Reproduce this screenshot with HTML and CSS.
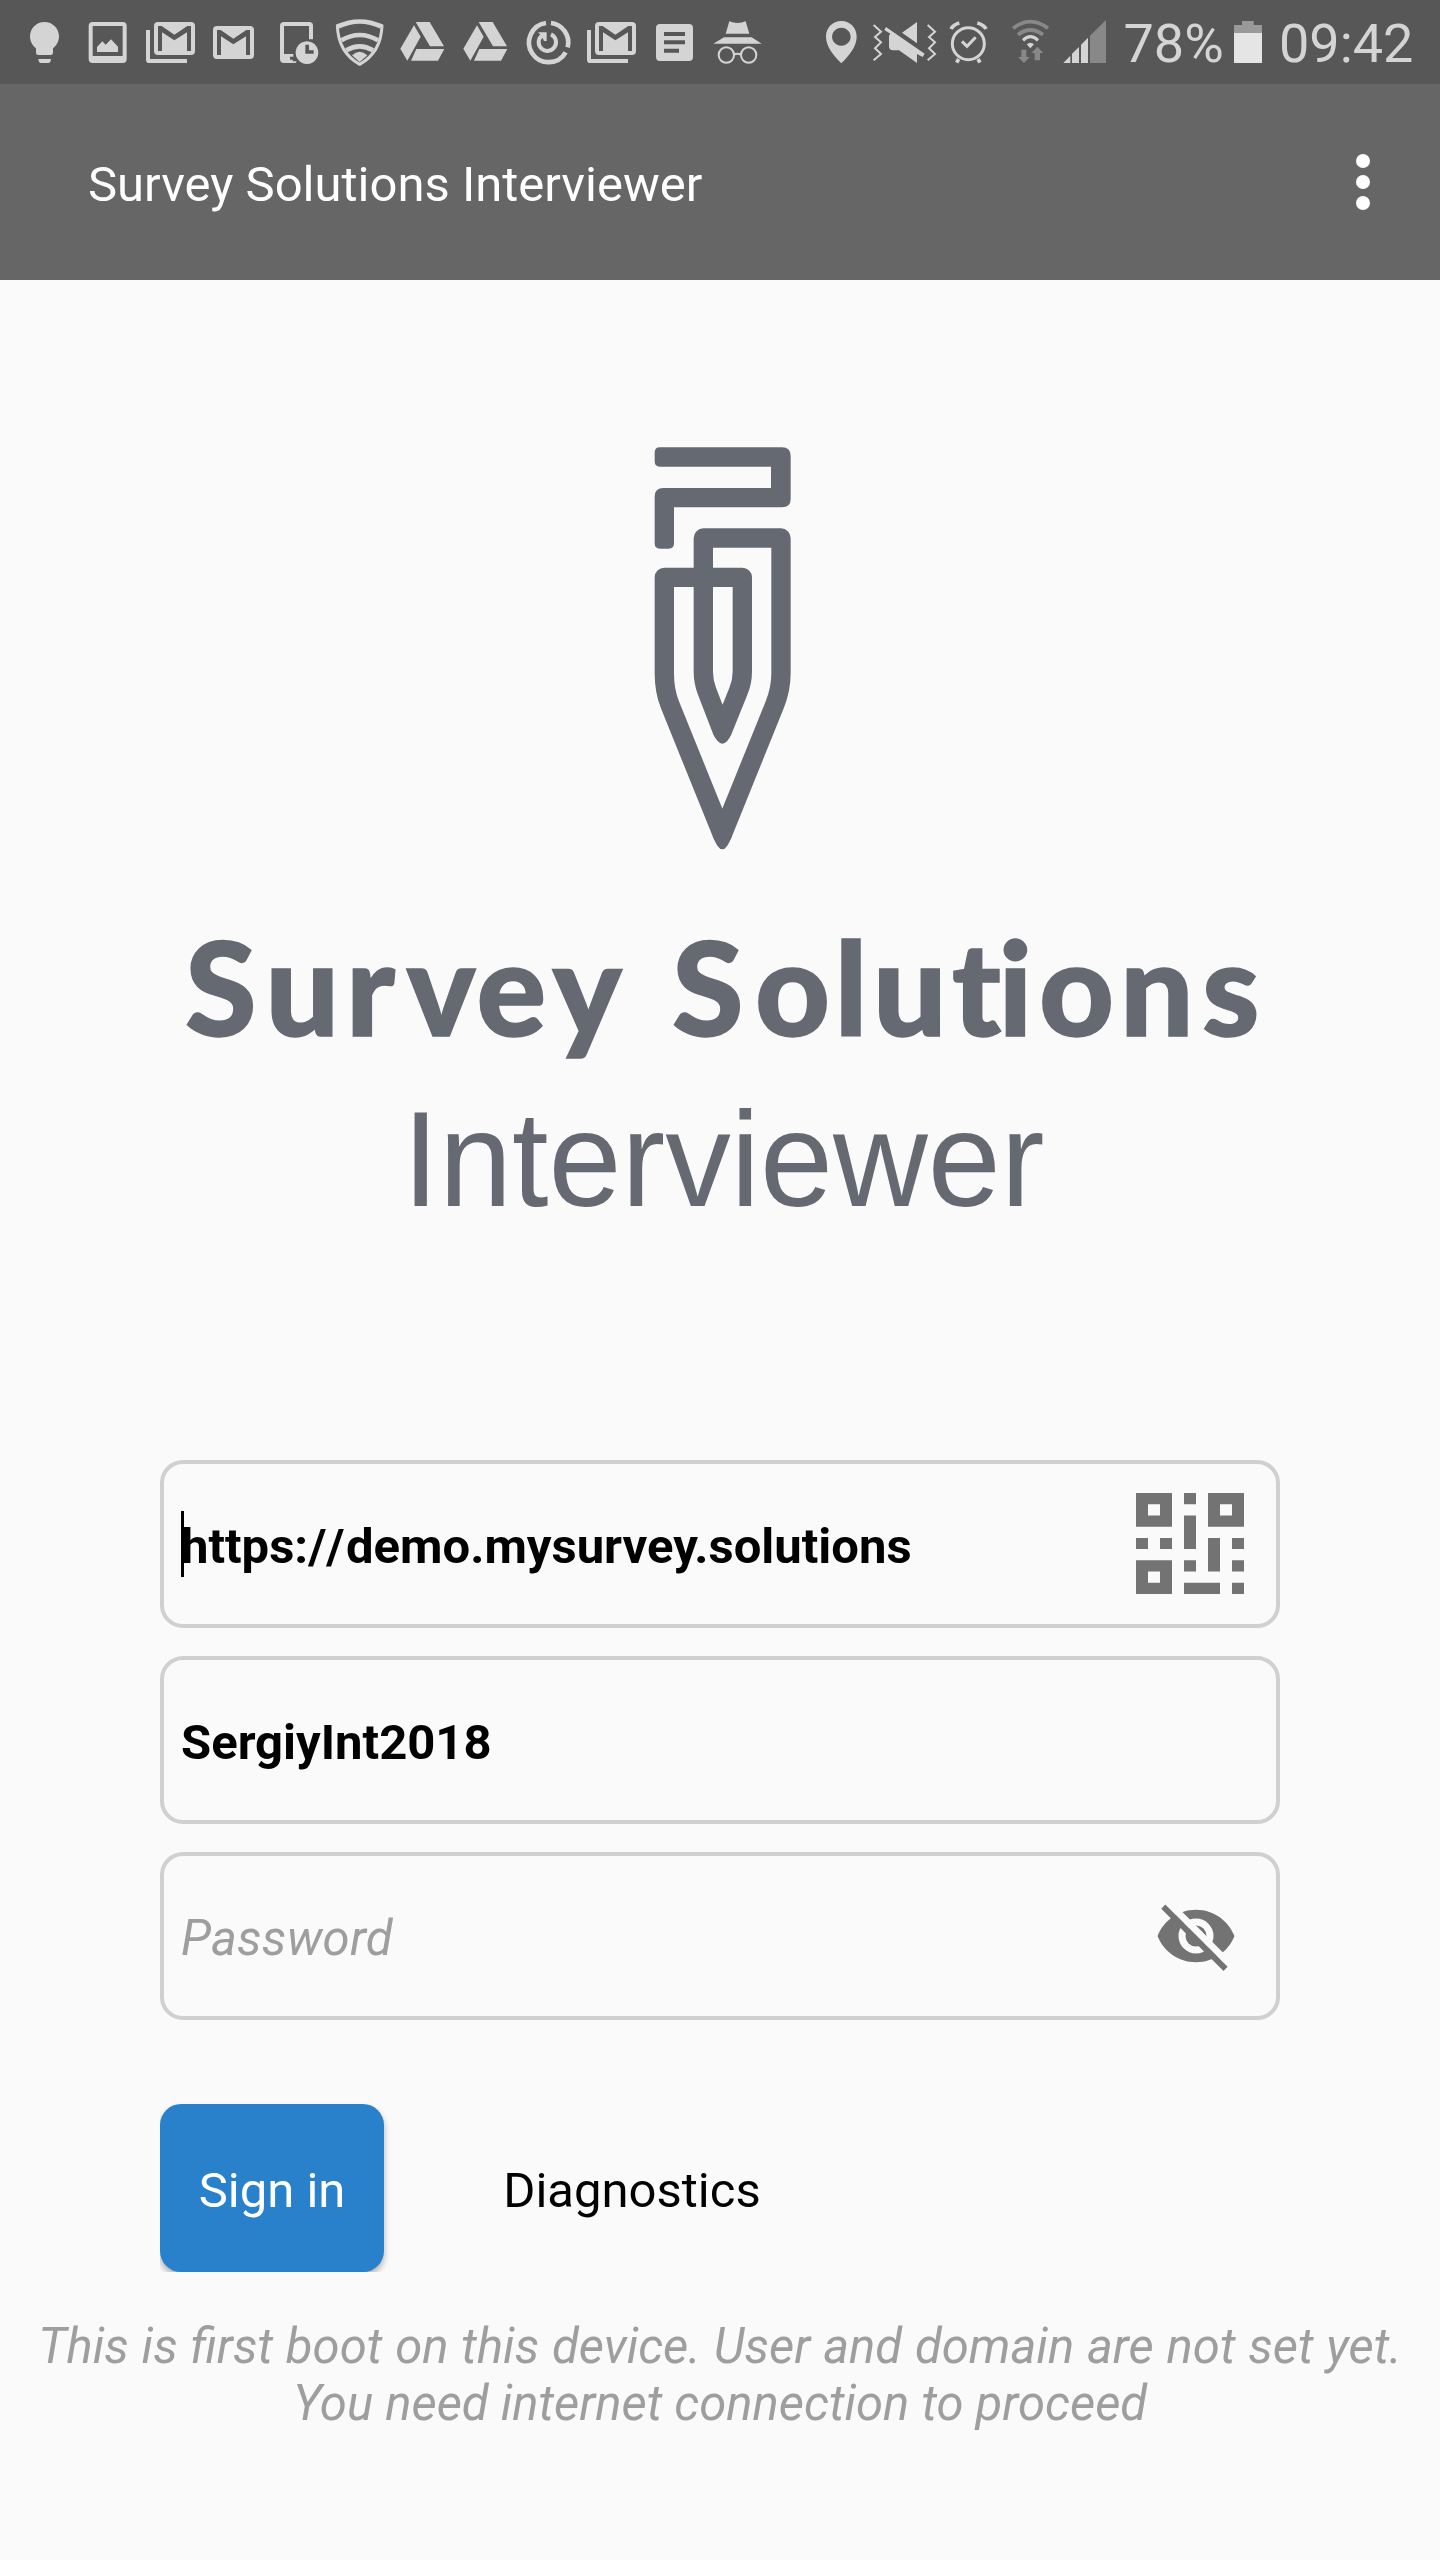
FILE: index.html
```html
<!DOCTYPE html>
<html lang="en">
<head>
<meta charset="utf-8">
<title>Survey Solutions Interviewer</title>
<link rel="stylesheet" href="styles.css">
</head>
<body>
<svg class="defs" width="0" height="0" aria-hidden="true">
  <defs>
    <g id="mail">
      <path fill-rule="evenodd" d="M651 78H750Q762 78 762 90V165Q762 177 750 177H651Q639 177 639 165V90Q639 78 651 78ZM651 90V165H663V109L700 133L738 109V165H750V90H739L700 116L662 90Z"/>
    </g>
    <g id="mail-stack">
      <use href="#mail" x="-177" y="-12"/>
      <path d="M438 90H450V177H561V189H448Q438 189 438 179Z"/>
    </g>
    <path id="drive" d="M1247 66H1289L1332 139H1290ZM1242 76L1262 110L1222 182L1201 146ZM1249 147H1333L1314 182H1233Z"/>
  </defs>
</svg>

<header class="status-bar">
  <div class="notifications">
    <svg width="75" height="84" viewBox="0 0 225 252"><path d="M133 66C158 66 177 85 177 109C177 125 169 137 159 145V158Q159 165 152 165H115Q108 165 108 158V145C98 137 90 125 90 109C90 85 109 66 133 66ZM115 177H153Q152 189 145 189H123Q116 189 115 177Z"/></svg>
    <svg width="63" height="84" viewBox="225 0 189 252"><path fill-rule="evenodd" d="M278 66H368Q380 66 380 78V177Q380 189 368 189H278Q266 189 266 177V78Q266 66 278 66ZM278 78V168H368V78ZM291 156V141L307 124L317 134L333 118L354 140V156Z"/></svg>
    <svg width="66" height="84" viewBox="414 0 198 252"><use href="#mail-stack"/></svg>
    <svg width="63" height="84" viewBox="612 0 189 252"><use href="#mail"/></svg>
    <svg width="60" height="84" viewBox="801 0 180 252"><path d="M852 66H928Q939 66 939 77V118H927V78H852V162H880V170H870V179H878V184H890L887 189H852Q840 189 840 177V78Q840 66 852 66Z"/><path fill-rule="evenodd" d="M921 124A34 34 0 1 1 920.900 124ZM916 134V161H941V151H927V134Z"/></svg>
    <svg width="65" height="84" viewBox="981 0 195 252"><g fill="none" stroke="#d4d4d4"><path stroke-width="9" stroke-linejoin="round" d="M1012 77Q1079 47 1146 77Q1143 158 1079 193Q1015 158 1012 77Z"/><path stroke-width="10" d="M1016 81Q1079 51 1142 81"/><path stroke-width="14" d="M1024 121Q1079 89 1134 121M1039 151Q1079 127 1119 151"/></g><path d="M1056 166Q1079 144 1102 166L1079 186Z"/></svg>
    <svg width="63" height="84" viewBox="1176 0 189 252"><use href="#drive"/></svg>
    <svg width="63" height="84" viewBox="1176 0 189 252"><use href="#drive"/></svg>
    <svg width="62" height="84" viewBox="1554 0 186 252"><g fill="none" stroke="#d4d4d4"><path stroke-width="14" d="M1638 69A59 59 0 1 0 1697 157M1653 69A59 59 0 0 1 1703 142"/><path stroke-width="12" d="M1625 107A26 26 0 1 0 1653 103"/></g><path d="M1614 97H1640V123H1632L1625 108Z"/></svg>
    <svg width="64" height="84" viewBox="417 0 192 252"><use href="#mail-stack"/></svg>
    <svg width="59" height="84" viewBox="1932 0 177 252"><path fill-rule="evenodd" d="M1980 72H2067Q2079 72 2079 84V171Q2079 183 2067 183H1980Q1968 183 1968 171V84Q1968 72 1980 72ZM1992 96V108H2055V96ZM1992 121V133H2055V121ZM1992 146V158H2037V146Z"/></svg>
    <svg width="70" height="84" viewBox="2109 0 210 252"><path d="M2188 64Q2213 74 2237 64L2248 101H2177ZM2172 112H2255L2285 131H2140Z"/><g fill="none" stroke="#d4d4d4" stroke-width="6"><circle cx="2179" cy="165" r="23"/><circle cx="2246" cy="165" r="23"/><path d="M2202 164Q2212 158 2223 164"/></g></svg>
  </div>

  <div class="system">
    <svg width="51" height="84" viewBox="2448 0 153 252"><path fill-rule="evenodd" d="M2524 63C2551 63 2570 84 2570 110C2570 139 2549 164 2524 190C2499 164 2478 139 2478 110C2478 84 2497 63 2524 63ZM2524 83A28 27 0 1 0 2524.100 83Z"/></svg>
    <svg width="76" height="84" viewBox="2601 0 228 252"><g fill="none" stroke="#d4d4d4" stroke-width="6"><path d="M2621 75L2643 95L2625 111L2643 127L2625 145L2643 162L2621 181M2783 75L2805 95L2787 111L2805 127L2787 145L2805 162L2783 181"/></g><path d="M2751 66V130L2706 98ZM2658 81L2774 161L2768 171L2751 162V189L2697 151H2679Q2667 151 2667 139V107L2671 101L2653 90Z"/></svg>
    <svg width="57" height="84" viewBox="2829 0 171 252"><g fill="none" stroke="#d4d4d4"><circle cx="2905" cy="131" r="48" stroke-width="9"/><path stroke-width="9" d="M2886 124L2901 139L2927 112"/><path stroke-width="11" d="M2876 177L2870 188M2934 177L2940 188M2853 87Q2860 74 2878 69M2958 87Q2951 74 2932 69"/></g></svg>
    <svg width="55" height="84" viewBox="3000 0 165 252"><g fill="none" stroke="#888" stroke-width="11"><path d="M3039 85Q3091 45 3144 85M3054 104Q3091 76 3129 104"/><path stroke="#d4d4d4" stroke-width="9" d="M3069 121Q3091 99 3114 121"/></g><path d="M3091 145L3080 133Q3091 124 3102 133Z"/><path fill="#888" d="M3064 149H3079V171H3089L3072 189L3054 171H3064ZM3112 140L3130 159H3120V181H3104V159H3094Z"/></svg>
    <svg width="60" height="84" viewBox="3165 0 180 252"><path d="M3190 189L3211 167V189ZM3216 189V161L3237 141V189ZM3243 189V134L3264 113V189Z"/><path fill="#888" d="M3270 189V107L3318 60V189Z"/></svg>
    <span class="battery-level">78%</span>
    <svg width="55" height="84" viewBox="3681 0 165 252"><path fill="#999" d="M3702 100V75H3726V63H3761V75H3786V100Z"/><path fill="#e5e5e5" d="M3702 99H3786V189H3702Z"/></svg>
    <span class="clock">09:42</span>
  </div>
</header>

<div class="app-bar">
  <h1 class="title">Survey Solutions Interviewer</h1>
  <svg class="menu" width="14" height="56" viewBox="0 0 14 56" fill="#fff"><circle cx="7" cy="7" r="7"/><circle cx="7" cy="28" r="7"/><circle cx="7" cy="49" r="7"/></svg>
</div>

<main class="login">
  <svg class="brand" width="1440" height="840" viewBox="0 420 1440 840">
    <g transform="translate(620 420) scale(.33333)">
      <path d="M120 82H486Q512 82 512 108V237Q512 262 486 262H162V370Q162 386 146 386H120Q104 386 104 370V230Q104 204 130 204H453V140H120Q104 140 104 124V98Q104 82 120 82Z"/>
      <path fill="none" stroke="#656972" stroke-width="58" stroke-linejoin="round" d="M133 472H367V755Q367 785 355 814L307 933L261 814Q250 785 250 755V354H483V760Q483 808 464 855L307 1243L150 855Q133 813 133 760Z"/>
      <path d="M279 1250Q293 1288 307 1288Q321 1288 335 1250ZM280 942Q293 971 307 971Q322 971 334 942Z"/>
    </g>
    <text class="brand-name" y="1035.500"><tspan x="185 265.500 346 406.500 476.500 552.500">Survey</tspan> <tspan x="672 755 834.500 873 952 998.500 1039 1120 1202">Solutions</tspan></text>
    <text class="brand-product" x="402.500" y="1205.500" textLength="642" lengthAdjust="spacingAndGlyphs">Interviewer</text>
  </svg>

  <form class="form">
    <div class="field"><span class="caret"></span><span class="value">https:<span class="slashes">//</span>demo.mysurvey.solutions</span>
      <svg class="qr" width="108" height="101" viewBox="0 0 9 9" preserveAspectRatio="none" fill="#737373"><path fill-rule="evenodd" d="M0 0H3V3H0ZM1 1V2H2V1ZM6 0H9V3H6ZM7 1V2H8V1ZM0 6H3V9H0ZM1 7V8H2V7ZM4 0H5V1H4ZM4 2H5V5H4ZM0 4H1V5H0ZM2 4H3V5H2ZM6 4H7V7H6ZM8 4H9V5H8ZM4 6H5V7H4ZM8 6H9V7H8ZM4 8H7V9H4ZM8 8H9V9H8Z"/></svg>
    </div>
    <div class="field"><span class="value">SergiyInt2018</span></div>
    <div class="field"><span class="placeholder">Password</span>
      <svg class="eye" width="84" height="84" viewBox="0 0 24 24">
        <mask id="gap"><rect width="24" height="24" fill="#fff"/><path d="M-1 -2.580L25 23.420" stroke="#000" stroke-width="1.960"/></mask>
        <g mask="url(#gap)" fill="#737373"><path fill-rule="evenodd" d="M12 4.500C7 4.500 2.730 7.610 1 12c1.730 4.390 6 7.500 11 7.500s9.270-3.110 11-7.500c-1.730-4.390-6-7.500-11-7.500ZM12 7A5 5 0 1 1 12 17A5 5 0 1 1 12 7Z"/><circle cx="12" cy="12" r="3"/></g>
        <path d="M2.650 3.600L20.450 21.400" stroke="#737373" stroke-width="1.650"/>
      </svg>
    </div>
    <div class="actions">
      <div class="button-clip"><button class="sign-in" type="button">Sign in</button></div>
      <button class="diagnostics" type="button">Diagnostics</button>
    </div>
  </form>
  <p class="hint"><span class="hint-lead">This is first boot on this device. User and domain are not set yet.</span><br>You need internet connection to proceed</p>
</main>
</body>
</html>
```

FILE: styles.css
```css
* { box-sizing: border-box; }
body {
  margin: 0;
  width: 1440px;
  min-height: 2560px;
  background: #fafafa;
  font-family: Roboto, sans-serif;
  font-size: 49px;
  color: #000;
}
svg { display: block; flex: none; }
.defs { position: absolute; }
.status-bar {
  display: flex;
  justify-content: space-between;
  height: 84px;
  background: #575757;
  color: #d4d4d4;
  fill: #d4d4d4;
}
.notifications, .system { display: flex; }
.system { width: 624px; }
.battery-level, .clock { font-size: 54px; line-height: 87px; white-space: nowrap; }
.battery-level { width: 112px; padding-left: 8.5px; }
.clock { margin-left: -3px; }
.app-bar {
  display: flex;
  align-items: center;
  justify-content: space-between;
  height: 196px;
  padding: 0 70px 0 88px;
  background: #666;
  color: #fff;
}
.title { margin: 0; padding-top: 6px; font-size: 49px; font-weight: 400; line-height: 58px; }
.login { display: flex; flex-direction: column; }
.brand { margin-top: 140px; fill: #656972; }
.brand-name {
  font-family: Lato, sans-serif;
  font-weight: 900;
  font-size: 130px;
  font-variant-ligatures: none;
  stroke: #656972;
  stroke-width: 1.5px;
}
.brand-product { font-family: "Liberation Sans", Arial, sans-serif; font-size: 136px; }
.form { display: flex; flex-direction: column; gap: 28px; margin: 200px 160px 0; }
.field {
  display: flex;
  align-items: center;
  height: 168px;
  padding: 0 17px;
  border: 4px solid #d0d0d0;
  border-radius: 23px;
}
.value, .placeholder { flex: 1; padding-top: 6px; line-height: 58px; white-space: nowrap; }
.value { font-weight: 700; }
.slashes { margin-right: 1.5px; font-kerning: none; }
.placeholder { font-style: italic; letter-spacing: .25px; color: #9e9e9e; }
.caret { width: 3px; height: 66px; margin-right: -3px; background: #000; }
.qr { margin: 0 15px 1px 0; }
.eye { margin-right: 21px; }
.actions { display: flex; gap: 60px; margin-top: 56px; }
.button-clip { overflow: hidden; width: 284px; height: 168px; margin-right: -60px; }
button { height: 168px; border: 0; padding: 4px 0 0; font: inherit; font-size: 49px; }
.sign-in {
  width: 224px;
  border-radius: 21px;
  background: #2a81cb;
  color: #fff;
  box-shadow: 0 4px 6px rgba(0, 0, 0, .3);
}
.diagnostics { width: 376px; background: none; color: #000; }
.hint {
  margin: 46px 0 0;
  text-align: center;
  font-style: italic;
  line-height: 57px;
  color: #9e9e9e;
  white-space: nowrap;
}
.hint-lead { word-spacing: .8px; }
```
